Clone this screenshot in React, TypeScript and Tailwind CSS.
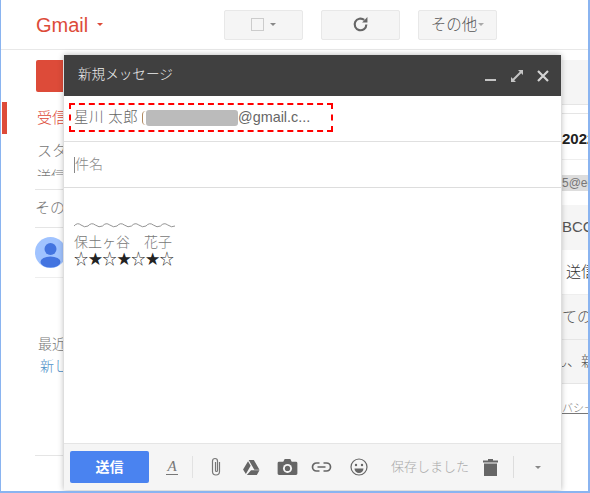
import React from "react";

const font = { fontFamily: '"Liberation Sans","Noto Sans CJK JP",sans-serif' };

function Btn({ w, children }: { w: string; children: React.ReactNode }) {
  return (
    <div className={`${w} h-[30px] flex items-center justify-center gap-[6px] rounded-[2px] border border-[#e8e8e8] bg-[#f5f5f5]`}>
      {children}
    </div>
  );
}

function Caret({ c = "#888888", s = 4 }: { c?: string; s?: number }) {
  return (
    <svg width={s * 2} height={s} viewBox="0 0 8 4">
      <path d="M0 0h8L4 4z" fill={c} />
    </svg>
  );
}

function Sidebar() {
  return (
    <div className="w-[62px] shrink-0 flex flex-col overflow-hidden">
      <div className="ml-[35px] mt-[10px] h-[32px] w-[40px] shrink-0 rounded-[2px] bg-[#dd4b39]" />
      <div className="flex h-[32px] shrink-0 mt-[10px] items-center">
        <div className="w-[5px] h-[32px] shrink-0 ml-[1px] bg-[#dd4b39]" />
        <span className="ml-[30px] text-[15px] text-[#dd4b39] font-light whitespace-nowrap">受信</span>
      </div>
      <div className="ml-[36px] mt-[1px] h-[32px] shrink-0 flex items-center text-[15px] font-light text-[#777777] whitespace-nowrap">スタ</div>
      <div className="ml-[36px] h-[10px] shrink-0 mt-[-1px] overflow-hidden whitespace-nowrap text-[14px] font-light text-[#777777] leading-[20px]">送信</div>
      <div className="ml-[34px] mt-[13px] h-px shrink-0 bg-[#e5e5e5]" />
      <div className="ml-[34px] h-[37px] shrink-0 flex items-center text-[15px] font-light text-[#777777] whitespace-nowrap">その他</div>
      <div className="ml-[34px] h-px shrink-0 bg-[#e5e5e5]" />
      <div className="ml-[34px] mt-[9px] w-[31px] h-[31px] shrink-0">
        <svg width="31" height="31" viewBox="0 0 31 31">
          <circle cx="15.5" cy="15.5" r="15.5" fill="#a0c3ff" />
          <circle cx="15.5" cy="12" r="6" fill="#4374e0" />
          <ellipse cx="15.5" cy="25" rx="10" ry="5.5" fill="#4374e0" />
        </svg>
      </div>
      <div className="ml-[34px] mt-[9px] h-px shrink-0 bg-[#eeeeee]" />
      <div className="ml-[37px] mt-[55px] h-[22px] shrink-0 flex items-center text-[14px] font-light text-[#777777] whitespace-nowrap">最近</div>
      <div className="ml-[39px] h-[22px] shrink-0 flex items-center text-[14px] font-light text-[#4d90c8] whitespace-nowrap">新し</div>
      <div className="ml-[34px] mt-[78px] h-px shrink-0 bg-[#e5e5e5]" />
    </div>
  );
}

function MailList() {
  return (
    <div className="flex-1 flex flex-col mt-[10px] overflow-hidden text-[15px] text-[#555555] whitespace-nowrap font-light">
      <div className="h-[45px] bg-[#f5f5f5] border-b border-[#e5e5e5] shrink-0" />
      <div className="h-[9px] border-b border-[#e5e5e5] shrink-0" />
      <div className="h-[46px] pt-[6px] flex items-center font-bold text-[#222222] border-b border-[#eeeeee] shrink-0 overflow-hidden">
        <span>2022</span>
      </div>
      <div className="h-[45px] flex items-center shrink-0 overflow-hidden">
        <span className="w-full h-[16px] bg-[#dddddd] text-[12px] leading-[16px] text-[#777777] overflow-hidden">5@ec</span>
      </div>
      <div className="h-[45px] flex items-center bg-[#f5f5f5] shrink-0 overflow-hidden">BCC</div>
      <div className="h-[45px] flex items-center border-b border-[#eeeeee] shrink-0 overflow-hidden text-[#333333]">
        <span className="ml-[-11px]">・送信</span>
      </div>
      <div className="h-[45px] flex items-center bg-[#f5f5f5] border-b border-[#e5e5e5] shrink-0 overflow-hidden">
        <span>ての(</span>
      </div>
      <div className="h-[44px] flex items-center bg-[#f5f5f5] border-b border-[#e5e5e5] shrink-0 overflow-hidden">
        <span className="ml-[-9px] text-[14px]">ん、新</span>
      </div>
      <div className="h-[44px] pt-[4px] flex items-center shrink-0 overflow-hidden text-[11px] underline text-[#777777]">バシー</div>
    </div>
  );
}

function Compose() {
  return (
    <div className="absolute left-[63px] top-[55px] w-[497px] h-[435px] flex flex-col bg-white shadow-[0_0_6px_rgba(0,0,0,0.3)]">
      <div className="h-[41px] shrink-0 bg-[#404040] flex items-center pl-[14px] pr-[11px] justify-between">
        <span className="text-[13.6px] text-[#eeeeee] font-light">新規メッセージ</span>
        <div className="flex items-center gap-[12px]">
          <svg width="14" height="14" viewBox="0 0 14 14">
            <rect x="1" y="10" width="11" height="2" fill="#c4c4c4" />
          </svg>
          <svg width="14" height="14" viewBox="0 0 14 14" fill="#c4c4c4">
            <path d="M8 1h5v5l-1.8-1.8L4.2 11.2 6 13H1V8l1.800 1.800 7-7z" />
          </svg>
          <svg width="14" height="14" viewBox="0 0 14 14" stroke="#d4d4d4" strokeWidth="2.2" fill="none">
            <path d="M2 2l10 10M12 2L2 12" />
          </svg>
        </div>
      </div>
      <div className="h-[46px] shrink-0 border-b border-[#e0e0e0] pt-[7px] pl-[5px]">
        <div className="w-[264px] h-[29px] border-2 border-dashed border-[#ff0000] flex items-center pl-[3px] text-[14.4px] text-[#666666] font-light whitespace-nowrap">
          <span className="tracking-[0.5px]">星川 太郎</span>
          <span className="ml-[4px] w-[4px] h-[14px] shrink-0 rounded-l-full border-l border-[#b08a60]" />
          <span className="w-[92px] h-[16px] shrink-0 rounded-[3px] bg-[#bbbbbb]" />
          <span className="font-normal">@gmail.c...</span>
        </div>
      </div>
      <div className="h-[46px] shrink-0 border-b border-[#dddddd] flex items-center pl-[10px] text-[14px] font-light text-[#888888]">
        <span className="w-px h-[16px] bg-[#888888]" />
        <span>件名</span>
      </div>
      <div className="flex-1 pl-[10px] pt-[29px] text-[14px] leading-[17px] font-light text-[#777777]">
        <div className="h-[17px] overflow-hidden">
          <svg width="102" height="17" viewBox="0 0 102 17" fill="none" stroke="#888888" strokeWidth="0.9">
            <path d="M0 9q3.5-4 7-1t7 1q3.5-4 7.3-1t7.2 1q3.5-4 7.3-1t7.2 1q3.5-4 7.3-1t7.2 1q3.5-4 7.3-1t7.2 1q3.5-4 7.3-1t7.2 1q3.5-4 7.3-1t7.2 1" />
          </svg>
        </div>
        <div>保土ヶ谷　花子</div>
        <div className="text-[#222222] text-[14.3px]" style={{ fontFamily: '"DejaVu Sans","Noto Sans CJK JP",sans-serif' }}>☆★☆★☆★☆</div>
      </div>
      <div className="h-[47px] shrink-0 bg-[#f5f5f5] border-t border-[#e5e5e5] flex items-center pl-[6px]">
        <div className="w-[79px] h-[32px] shrink-0 rounded-[2px] bg-[#4a83f0] flex items-center justify-center text-[14px] font-bold text-white">送信</div>
        <div className="ml-[17px] flex flex-col items-center w-[12px] shrink-0">
          <span className="text-[15px] leading-[13px] italic text-[#777777]" style={{ fontFamily: '"Liberation Serif",serif' }}>A</span>
          <span className="mt-[1px] w-[12px] h-px bg-[#777777]" />
        </div>
        <div className="ml-[14px] w-px h-[22px] shrink-0 bg-[#e2e2e2]" />
        <svg className="ml-[17px] shrink-0" width="12" height="20" viewBox="0 0 12 20" fill="none" stroke="#777777" strokeWidth="1.2">
          <path d="M9.5 5v9.5a3.5 3.5 0 0 1-7 0V4a2.5 2.5 0 0 1 5 0v9.5a1 1 0 0 1-2 0V5" />
        </svg>
        <svg className="ml-[21px] shrink-0" width="17" height="15" viewBox="0 0 18 16" fill="#666666">
          <path d="M6 0h5.500l6 10.500h-5.500zM5.300 1.300l2.800 4.800L3 15 0 10zM8.500 11h9L14.700 16H4z" />
        </svg>
        <svg className="ml-[17px] shrink-0" width="21" height="16" viewBox="0 0 21 17">
          <path d="M1.500 3H6l1.500-3h6L15 3h4.500A1.500 1.500 0 0 1 21 4.500V15.500A1.500 1.500 0 0 1 19.500 17H1.500A1.500 1.500 0 0 1 0 15.500V4.500A1.500 1.500 0 0 1 1.500 3z" fill="#666666" />
          <circle cx="10.500" cy="10" r="4.800" fill="#f5f5f5" />
          <circle cx="10.500" cy="10" r="2.800" fill="#666666" />
        </svg>
        <svg className="ml-[13px] shrink-0" width="21" height="10" viewBox="0 0 20 10" fill="none" stroke="#666666" strokeWidth="1.700">
          <path d="M8 1H5a4 4 0 0 0 0 8h3M12 1h3a4 4 0 0 1 0 8h-3M6 5h8" />
        </svg>
        <svg className="ml-[18px] shrink-0" width="18" height="18" viewBox="0 0 18 18" fill="none" stroke="#666666" strokeWidth="1.200">
          <circle cx="9" cy="9" r="8" />
          <circle cx="6" cy="7" r="1.200" fill="#666666" stroke="none" />
          <circle cx="12" cy="7" r="1.200" fill="#666666" stroke="none" />
          <path d="M4.500 10.500h9a4.500 4.500 0 0 1-9 0z" fill="#666666" stroke="none" />
        </svg>
        <span className="ml-[23px] text-[13px] font-light text-[#aaaaaa] whitespace-nowrap">保存しました</span>
        <svg className="ml-[14px] shrink-0" width="15" height="17" viewBox="0 0 15 17" fill="#666666">
          <path d="M5 0h5v1.500h5V3.500H0V1.500h5zM1 4.500h13V17H1z" />
        </svg>
        <div className="ml-[15px] w-px h-[22px] shrink-0 bg-[#dddddd]" />
        <div className="ml-[21px] flex"><Caret c="#888888" s={3} /></div>
      </div>
    </div>
  );
}

export default function App() {
  return (
    <div className="relative w-[590px] h-[493px] overflow-hidden bg-white border-l border-r-2 border-b-2 border-[#8ab4f0]" style={font}>
      <div className="h-[50px] flex items-center border-b border-[#e8e8e8] pl-[35px]">
        <span className="text-[20px] text-[#dd4b39] w-[61px] font-normal">Gmail</span>
        <Caret c="#dd4b39" s={3} />
        <div className="ml-[121px]"><Btn w="w-[79px]">
          <span className="w-[13px] h-[13px] border border-[#cccccc] bg-[#f5f5f5]" />
          <Caret c="#888888" s={3} />
        </Btn></div>
        <div className="ml-[18px]"><Btn w="w-[79px]">
          <svg width="17" height="17" viewBox="0 0 16 16" fill="none" stroke="#666666" strokeWidth="2">
            <path d="M13.500 8a5.500 5.500 0 1 1-2-4.300" />
            <path d="M14.500 1v5h-5z" fill="#666666" stroke="none" />
          </svg>
        </Btn></div>
        <div className="ml-[18px]"><Btn w="w-[79px]">
          <span className="text-[15.500px] font-light text-[#555555] whitespace-nowrap">その他</span>
          <span className="ml-[-5px] flex"><Caret c="#aaaaaa" s={3} /></span>
        </Btn></div>
      </div>
      <div className="flex h-[441px]">
        <Sidebar />
        <div className="w-[499px] shrink-0" />
        <MailList />
      </div>
      <Compose />
    </div>
  );
}
